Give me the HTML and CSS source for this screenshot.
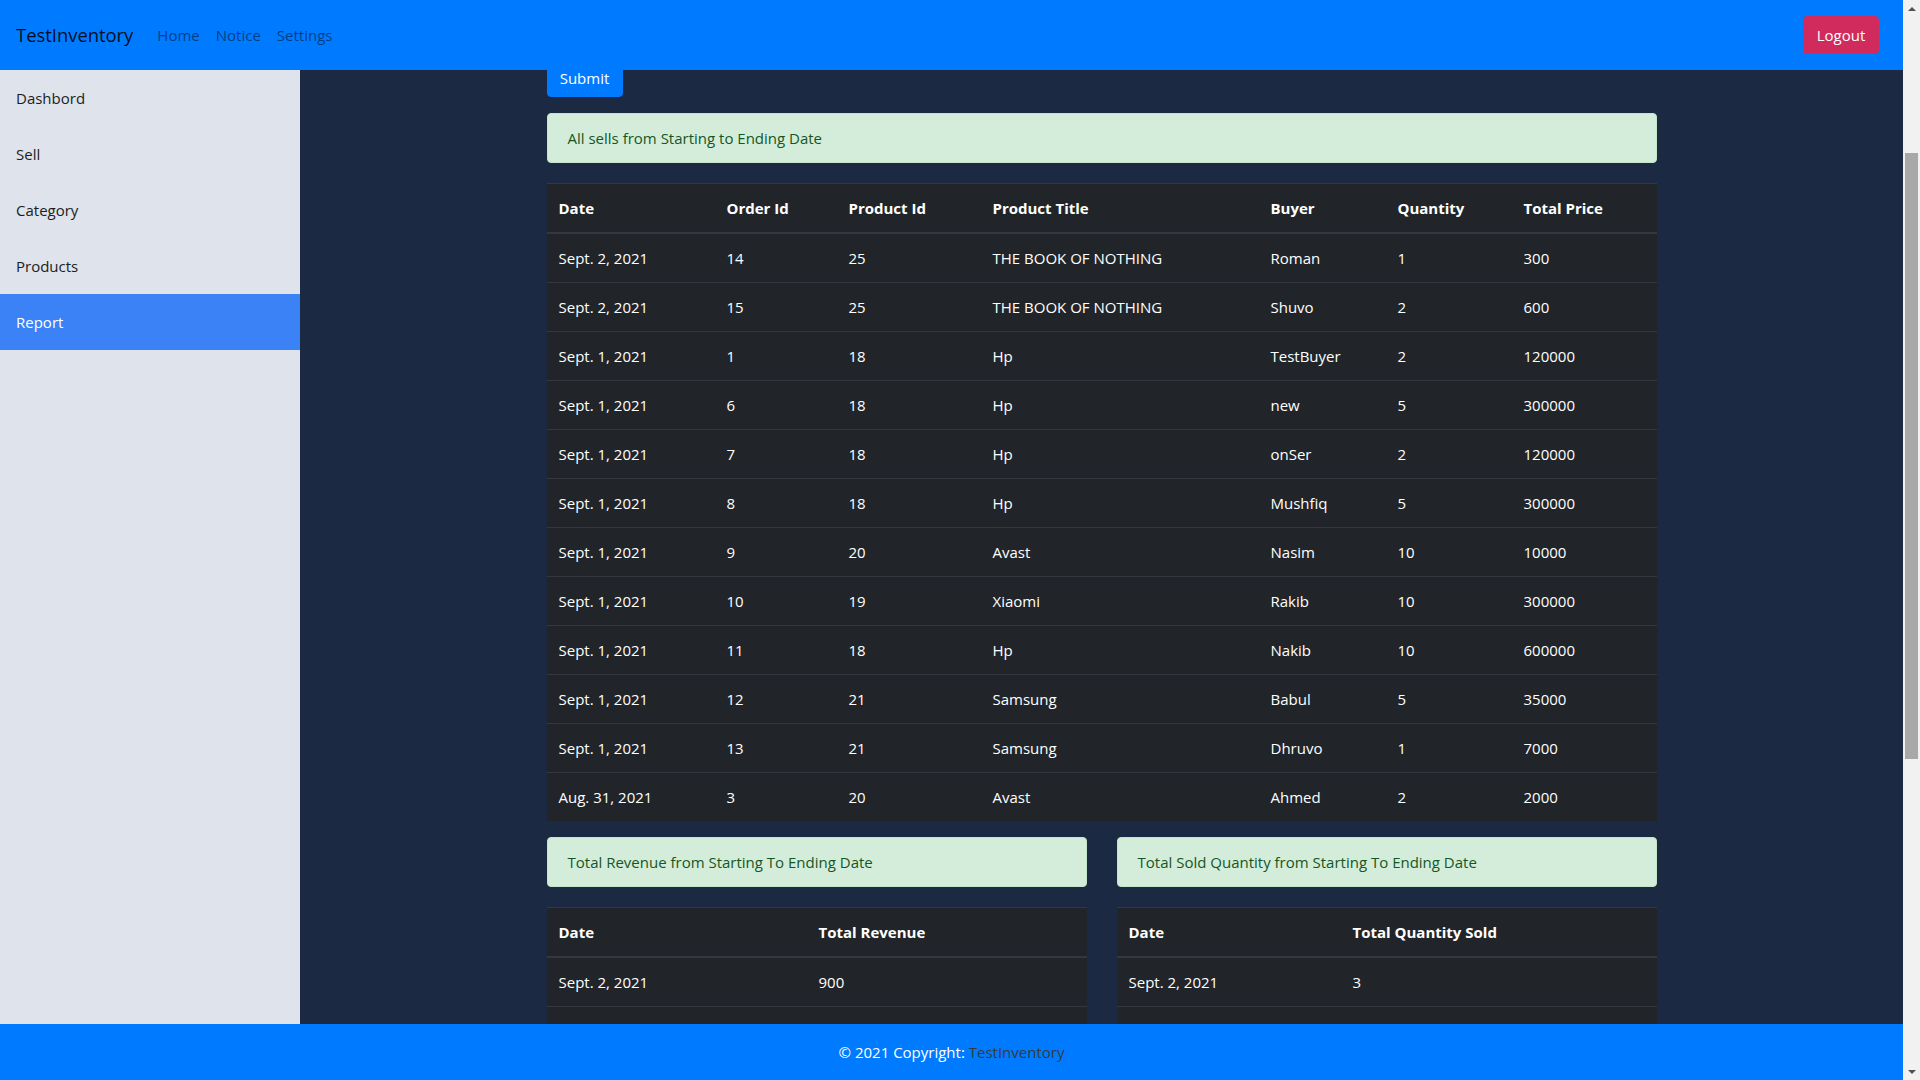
FILE: index.html
```html
<!DOCTYPE html>
<html lang="en">
<head>
<meta charset="utf-8">
<title>TestInventory - Report</title>
<link rel="stylesheet" href="styles.css">
</head>
<body>
<header class="navbar">
  <div class="nav-left">
    <a class="brand" href="#">TestInventory</a>
    <nav class="nav-links">
      <a class="nav-link" href="#">Home</a>
      <a class="nav-link" href="#">Notice</a>
      <a class="nav-link" href="#">Settings</a>
    </nav>
  </div>
  <button class="btn-logout" type="button">Logout</button>
</header>

<aside class="sidebar">
  <a class="side-item" href="#">Dashbord</a>
  <a class="side-item" href="#">Sell</a>
  <a class="side-item" href="#">Category</a>
  <a class="side-item" href="#">Products</a>
  <a class="side-item active" href="#">Report</a>
</aside>

<main class="main">
  <div class="container">
    <form class="date-form">
      <div class="form-group">
        <input class="form-control" type="text" aria-label="Starting Date">
      </div>
      <div class="form-group">
        <input class="form-control" type="text" aria-label="Ending Date">
      </div>
      <button class="btn-submit" type="button">Submit</button>
    </form>

    <div class="alert">All sells from Starting to Ending Date</div>

    <table class="data-table">
      <colgroup>
        <col class="c-date"><col class="c-order"><col class="c-pid"><col class="c-title"><col class="c-buyer"><col class="c-qty"><col class="c-price">
      </colgroup>
      <thead>
        <tr><th>Date</th><th>Order Id</th><th>Product Id</th><th>Product Title</th><th>Buyer</th><th>Quantity</th><th>Total Price</th></tr>
      </thead>
      <tbody>
        <tr><td>Sept. 2, 2021</td><td>14</td><td>25</td><td>THE BOOK OF NOTHING</td><td>Roman</td><td>1</td><td>300</td></tr>
        <tr><td>Sept. 2, 2021</td><td>15</td><td>25</td><td>THE BOOK OF NOTHING</td><td>Shuvo</td><td>2</td><td>600</td></tr>
        <tr><td>Sept. 1, 2021</td><td>1</td><td>18</td><td>Hp</td><td>TestBuyer</td><td>2</td><td>120000</td></tr>
        <tr><td>Sept. 1, 2021</td><td>6</td><td>18</td><td>Hp</td><td>new</td><td>5</td><td>300000</td></tr>
        <tr><td>Sept. 1, 2021</td><td>7</td><td>18</td><td>Hp</td><td>onSer</td><td>2</td><td>120000</td></tr>
        <tr><td>Sept. 1, 2021</td><td>8</td><td>18</td><td>Hp</td><td>Mushfiq</td><td>5</td><td>300000</td></tr>
        <tr><td>Sept. 1, 2021</td><td>9</td><td>20</td><td>Avast</td><td>Nasim</td><td>10</td><td>10000</td></tr>
        <tr><td>Sept. 1, 2021</td><td>10</td><td>19</td><td>Xiaomi</td><td>Rakib</td><td>10</td><td>300000</td></tr>
        <tr><td>Sept. 1, 2021</td><td>11</td><td>18</td><td>Hp</td><td>Nakib</td><td>10</td><td>600000</td></tr>
        <tr><td>Sept. 1, 2021</td><td>12</td><td>21</td><td>Samsung</td><td>Babul</td><td>5</td><td>35000</td></tr>
        <tr><td>Sept. 1, 2021</td><td>13</td><td>21</td><td>Samsung</td><td>Dhruvo</td><td>1</td><td>7000</td></tr>
        <tr><td>Aug. 31, 2021</td><td>3</td><td>20</td><td>Avast</td><td>Ahmed</td><td>2</td><td>2000</td></tr>
      </tbody>
    </table>

    <div class="summary-row">
      <div class="summary-col">
        <div class="alert">Total Revenue from Starting To Ending Date</div>
        <table class="data-table">
          <colgroup><col class="c-rev-date"><col class="c-rev-val"></colgroup>
          <thead><tr><th>Date</th><th>Total Revenue</th></tr></thead>
          <tbody>
            <tr><td>Sept. 2, 2021</td><td>900</td></tr>
            <tr><td>Sept. 1, 2021</td><td>1792000</td></tr>
            <tr><td>Aug. 31, 2021</td><td>2000</td></tr>
          </tbody>
        </table>
      </div>
      <div class="summary-col">
        <div class="alert">Total Sold Quantity from Starting To Ending Date</div>
        <table class="data-table">
          <colgroup><col class="c-qs-date"><col class="c-qs-val"></colgroup>
          <thead><tr><th>Date</th><th>Total Quantity Sold</th></tr></thead>
          <tbody>
            <tr><td>Sept. 2, 2021</td><td>3</td></tr>
            <tr><td>Sept. 1, 2021</td><td>50</td></tr>
            <tr><td>Aug. 31, 2021</td><td>2</td></tr>
          </tbody>
        </table>
      </div>
    </div>
  </div>
</main>

<footer class="footer">
  © 2021 Copyright: <a class="footer-link" href="#">TestInventory</a>
</footer>

<div class="fake-scrollbar" aria-hidden="true">
  <div class="sb-btn"><span class="sb-arrow-up"></span></div>
  <div class="sb-track"><div class="sb-thumb"></div></div>
  <div class="sb-btn"><span class="sb-arrow-down"></span></div>
</div>

<script src="script.js"></script>
</body>
</html>
```

FILE: styles.css
```css
html {
  scroll-behavior: auto;
}

body {
  margin: 0;
  font-family: "Open Sans", "Noto Sans", sans-serif;
  font-size: 15px;
  line-height: 24px;
  background: #1c2942;
  color: #212529;
}

a {
  text-decoration: none;
}

/* ---------- top navbar ---------- */
.navbar {
  position: fixed;
  top: 0;
  left: 0;
  right: 17px;
  height: 70px;
  box-sizing: border-box;
  padding: 0 24px 0 16px;
  background: #007bff;
  display: flex;
  align-items: center;
  justify-content: space-between;
  z-index: 10;
}
.nav-left {
  display: flex;
  align-items: center;
}
.brand {
  font-size: 18.4px;
  line-height: 30px;
  color: rgba(0, 0, 0, 0.9);
  margin-right: 16px;
}
.nav-links {
  display: flex;
}
.nav-link {
  padding: 0 8px;
  color: rgba(0, 0, 0, 0.5);
  font-size: 15px;
}
.btn-logout {
  font-family: inherit;
  font-size: 15px;
  line-height: 24px;
  padding: 6px 12px;
  min-width: 76px;
  border: 1px solid #d12a5c;
  border-radius: 4px;
  background: #d12a5c;
  color: #fff;
}

/* ---------- sidebar ---------- */
.sidebar {
  position: fixed;
  top: 70px;
  left: 0;
  bottom: 56px;
  width: 300px;
  background: #dee3ec;
  display: flex;
  flex-direction: column;
  z-index: 5;
}
.side-item {
  display: block;
  padding: 16px;
  line-height: 24px;
  color: #1b1e21;
}
.side-item.active {
  background: #3b82f6;
  color: #fff;
}

/* ---------- main ---------- */
.main {
  margin-left: 300px;
  margin-right: 17px;
  padding-top: 70px;
}
.container {
  max-width: 1110px;
  margin: 0 auto;
  padding: 123px 15px 502px;
}
.form-group {
  margin-bottom: 16px;
}
.form-control {
  display: block;
  width: 100%;
  height: 38px;
  box-sizing: border-box;
  padding: 6px 12px;
  border: 1px solid #ced4da;
  border-radius: 4px;
  font-family: inherit;
  font-size: 15px;
}
.btn-submit {
  display: block;
  font-family: inherit;
  font-size: 15px;
  line-height: 24px;
  height: 38px;
  padding: 6px 12px;
  min-width: 76px;
  border: 1px solid #007bff;
  border-radius: 4px;
  background: #007bff;
  color: #fff;
}

.alert {
  margin: 16px 0 20px;
  padding: 12px 20px;
  border: 1px solid #c3e6cb;
  border-radius: 4px;
  background: #d4edda;
  color: #155724;
}

.data-table {
  width: 100%;
  table-layout: fixed;
  border-collapse: collapse;
  background: #212529;
  color: #fff;
  margin-bottom: 16px;
}
.data-table th,
.data-table td {
  padding: 12px;
  text-align: left;
  border-top: 1px solid #32383e;
  white-space: nowrap;
  overflow: hidden;
}
.data-table th {
  font-weight: 700;
  border-bottom: 2px solid #32383e;
}

.c-date { width: 168px; }
.c-order { width: 122px; }
.c-pid { width: 144px; }
.c-title { width: 278px; }
.c-buyer { width: 127px; }
.c-qty { width: 126px; }
.c-price { width: 145px; }

.c-rev-date { width: 260px; }
.c-rev-val { width: 280px; }
.c-qs-date { width: 224px; }
.c-qs-val { width: 316px; }

.summary-row {
  display: flex;
  gap: 30px;
}
.summary-col {
  flex: 1 1 0;
  min-width: 0;
}
.summary-col .alert {
  margin-top: 0;
}

/* ---------- footer ---------- */
.footer {
  position: fixed;
  left: 0;
  right: 17px;
  bottom: 0;
  height: 56px;
  background: #007bff;
  color: #fff;
  text-align: center;
  line-height: 56px;
  font-size: 15px;
  z-index: 10;
}
.footer-link {
  color: #343a40;
}

/* ---------- window scrollbar (drawn) ---------- */
.fake-scrollbar {
  position: fixed;
  top: 0;
  right: 0;
  width: 17px;
  height: 100vh;
  background: #f1f1f1;
  display: flex;
  flex-direction: column;
  z-index: 20;
}
.sb-btn {
  height: 17px;
  flex: 0 0 17px;
  display: flex;
  align-items: center;
  justify-content: center;
}
.sb-arrow-up {
  width: 0;
  height: 0;
  border-left: 4px solid transparent;
  border-right: 4px solid transparent;
  border-bottom: 4px solid #505050;
}
.sb-arrow-down {
  width: 0;
  height: 0;
  border-left: 4px solid transparent;
  border-right: 4px solid transparent;
  border-top: 4px solid #505050;
}
.sb-track {
  flex: 1 1 auto;
  padding-top: 136px;
}
.sb-thumb {
  margin: 0 2px;
  height: 606px;
  background: #a8a8a8;
}
```

FILE: script.js
```js
window.scrollTo(0, 242);
window.addEventListener('load', function () {
  window.scrollTo(0, 242);
});
```
